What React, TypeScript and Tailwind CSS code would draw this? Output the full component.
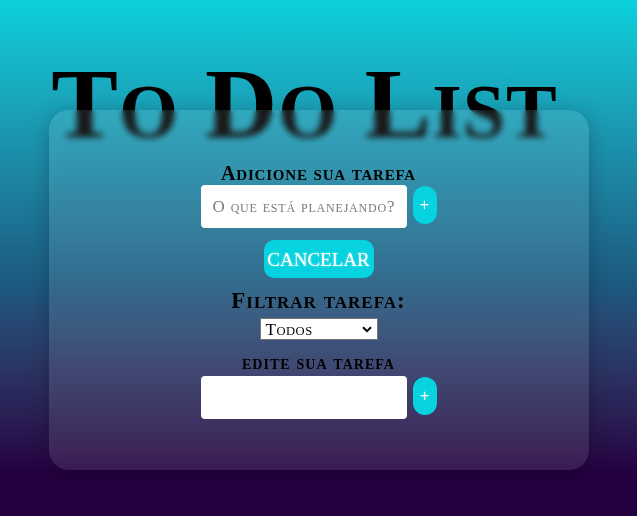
import React from 'react';

const serif = "font-['Liberation_Serif','Times_New_Roman',serif]";

// capitals at full size, lowercase turned into smaller capitals
function SC({ text, ratio = 0.76 }: { text: string; ratio?: number }) {
  const runs: { big: boolean; s: string }[] = [];
  for (const ch of text) {
    const big = ch !== ch.toLowerCase() || !/[a-zà-ú]/i.test(ch);
    const last = runs[runs.length - 1];
    if (last && last.big === big) last.s += ch;
    else runs.push({ big, s: ch });
  }
  return (
    <>
      {runs.map((r, i) =>
        r.big ? (
          <span key={i}>{r.s}</span>
        ) : (
          <span key={i} style={{ fontSize: `${ratio}em` }}>
            {r.s.toUpperCase()}
          </span>
        )
      )}
    </>
  );
}

function AddRow({ placeholder }: { placeholder?: string }) {
  return (
    <div className="flex items-center gap-[6px]">
      <input
        placeholder={placeholder}
        className={`w-[206px] h-[43px] rounded-[4px] bg-white px-[12px] text-[17px] tracking-[0.8px] text-black outline-none placeholder:text-[#7a7a7a] [font-variant:small-caps] ${serif}`}
      />
      <button className="w-[24px] h-[38px] -mt-[3px] rounded-[12px] bg-[#06d3df] text-white text-[16px] font-['Liberation_Sans',sans-serif] leading-none">
        +
      </button>
    </div>
  );
}

export default function App() {
  return (
    <div className={`min-h-screen bg-linear-to-b from-[#0bd0dc] via-[#1c5a80] via-55% to-[#240040] to-92% ${serif}`}>
      <div className="flex flex-col items-center pt-[54px]">
        <h1 className="text-[100px] font-bold leading-none text-black tracking-[1px] -ml-[28px] whitespace-nowrap">
          <SC text="To Do List" />
        </h1>

        <div className="-mt-[44px] w-[540px] h-[360px] rounded-[20px] bg-white/10 backdrop-blur-[3px] shadow-[0_4px_20px_rgba(0,0,0,0.25)] flex flex-col items-center pt-[53px]">
          <label className="text-[20px] font-bold leading-[20px] text-black tracking-[0.8px]">
            <SC text="Adicione sua tarefa" ratio={0.75} />
          </label>
          <AddRow placeholder="O que está planejando?" />
          <button className="mt-[12px] w-[110px] h-[38px] rounded-[10px] bg-[#06d3df] text-white text-[19px] leading-none [text-shadow:0_0_2px_rgba(255,255,255,0.7)]">
            CANCELAR
          </button>

          <label className="mt-[11px] text-[23px] font-bold leading-[24px] text-black tracking-[1px]">
            <SC text="Filtrar tarefa:" ratio={0.74} />
          </label>
          <div className="mt-[3px] w-[118px] h-[22px] bg-white border border-[#777] flex items-center justify-between pl-[5px] pr-[5px]">
            <span className="text-[17px] leading-none text-black tracking-[0.5px]">
              <SC text="Todos" ratio={0.74} />
            </span>
            <svg width="10" height="7" viewBox="0 0 10 7">
              <path d="M1 1.2l4 4 4-4" fill="none" stroke="#000" strokeWidth="2" />
            </svg>
          </div>

          <label className="mt-[13px] text-[19px] font-bold leading-[19px] text-black tracking-[1px]">
            <SC text="edite sua tarefa" ratio={0.74} />
          </label>
          <div className="mt-[2px]">
            <AddRow />
          </div>
        </div>
      </div>
    </div>
  );
}
